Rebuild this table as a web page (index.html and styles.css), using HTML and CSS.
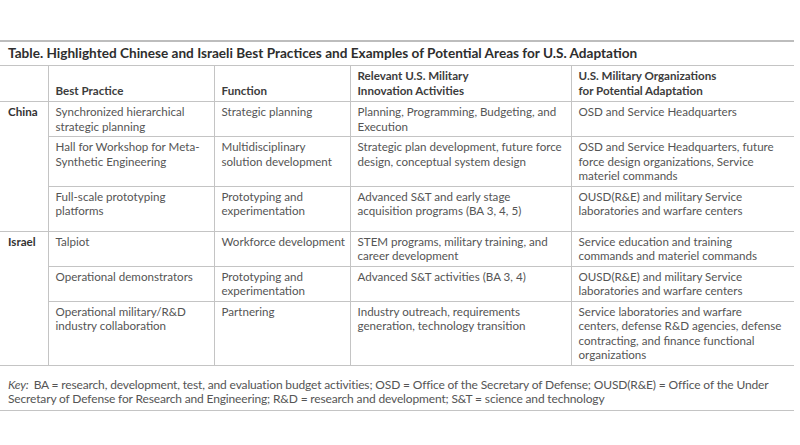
FILE: index.html
```html
<!DOCTYPE html>
<html lang="en">
<head>
<meta charset="utf-8">
<title>Table</title>
<link rel="stylesheet" href="styles.css">
</head>
<body>
<div class="page">
  <table class="bp">
    <colgroup>
      <col class="c1"><col class="c2"><col class="c3"><col class="c4"><col class="c5">
    </colgroup>
    <thead>
      <tr class="title-row"><th colspan="5" class="title">Table. Highlighted Chinese and Israeli Best Practices and Examples of Potential Areas for U.S. Adaptation</th></tr>
      <tr class="head-row">
        <th class="country"></th>
        <th>Best Practice</th>
        <th>Function</th>
        <th>Relevant U.S. Military<br>Innovation Activities</th>
        <th>U.S. Military Organizations<br>for Potential Adaptation</th>
      </tr>
    </thead>
    <tbody>
      <tr class="group-start">
        <th class="country" rowspan="3">China</th>
        <td>Synchronized hierarchical strategic planning</td>
        <td>Strategic planning</td>
        <td>Planning, Programming, Budgeting, and Execution</td>
        <td>OSD and Service Headquarters</td>
      </tr>
      <tr>
        <td>Hall for Workshop for Meta-Synthetic Engineering</td>
        <td>Multidisciplinary solution development</td>
        <td>Strategic plan development, future force design, conceptual system design</td>
        <td>OSD and Service Headquarters, future force design organizations, Service materiel commands</td>
      </tr>
      <tr class="group-end">
        <td>Full-scale prototyping platforms</td>
        <td>Prototyping and experimentation</td>
        <td>Advanced S&amp;T and early stage acquisition programs (BA 3, 4, 5)</td>
        <td>OUSD(R&amp;E) and military Service laboratories and warfare centers</td>
      </tr>
      <tr class="group-start">
        <th class="country" rowspan="3">Israel</th>
        <td>Talpiot</td>
        <td>Workforce development</td>
        <td>STEM programs, military training, and career development</td>
        <td>Service education and training commands and materiel commands</td>
      </tr>
      <tr>
        <td>Operational demonstrators</td>
        <td>Prototyping and experimentation</td>
        <td>Advanced S&amp;T activities (BA 3, 4)</td>
        <td>OUSD(R&amp;E) and military Service laboratories and warfare centers</td>
      </tr>
      <tr class="last">
        <td>Operational military/R&amp;D industry collaboration</td>
        <td>Partnering</td>
        <td>Industry outreach, requirements generation, technology transition</td>
        <td>Service laboratories and warfare<br>centers, defense R&amp;D agencies, defense contracting, and finance functional organizations</td>
      </tr>
    </tbody>
  </table>
  <p class="key"><em class="key-label">Key:</em> BA = research, development, test, and evaluation budget activities; OSD = Office of the Secretary of Defense; OUSD(R&amp;E) = Office of the Under Secretary of Defense for Research and Engineering; R&amp;D = research and development; S&amp;T = science and technology</p>
</div>
</body>
</html>
```

FILE: styles.css
```css
html, body {
  margin: 0;
  padding: 0;
  background: #ffffff;
}

.page {
  width: 794px;
  padding-top: 40px;
  font-family: Lato, "Liberation Sans", sans-serif;
  font-size: 11.6px;
  color: #555555;
}

.bp {
  width: 794px;
  border-collapse: collapse;
  table-layout: fixed;
  border-top: 2px solid #bdbdbd;
}

.c1 { width: 48px; }
.c2 { width: 166px; }
.c3 { width: 136px; }
.c4 { width: 221px; }
.c5 { width: 223px; }

.bp th,
.bp td {
  text-align: left;
  vertical-align: top;
  line-height: 14.5px;
  padding: 3px 3px 2px 7px;
  border: 1px solid #c4c4c4;
  border-top: none;
  font-weight: 400;
}

.bp tr > :first-child { border-left: none; }
.bp tr > :last-child { border-right: none; }

.bp tbody td:last-child { padding-right: 5px; }

.bp .title {
  font-size: 13.6px;
  font-weight: 700;
  color: #2e2e2e;
  padding: 3px 8px 4px 8px;
  line-height: 16px;
  height: 14px;
}

.head-row th {
  vertical-align: bottom;
  font-weight: 700;
  color: #3c3c3c;
  padding: 2px 3px 3px 7px;
  height: 30px;
}

.bp .country {
  font-weight: 700;
  color: #333333;
  padding-left: 8px;
}

.group-end td { padding-bottom: 12px; }

.key {
  margin: 0;
  width: 778px;
  padding: 12px 8px 4px 8px;
  border-bottom: 1px solid #c4c4c4;
  font-size: 12px;
  letter-spacing: -0.15px;
  line-height: 14px;
  color: #555555;
}

.key-label {
  font-style: italic;
  margin-right: 2px;
}
```
